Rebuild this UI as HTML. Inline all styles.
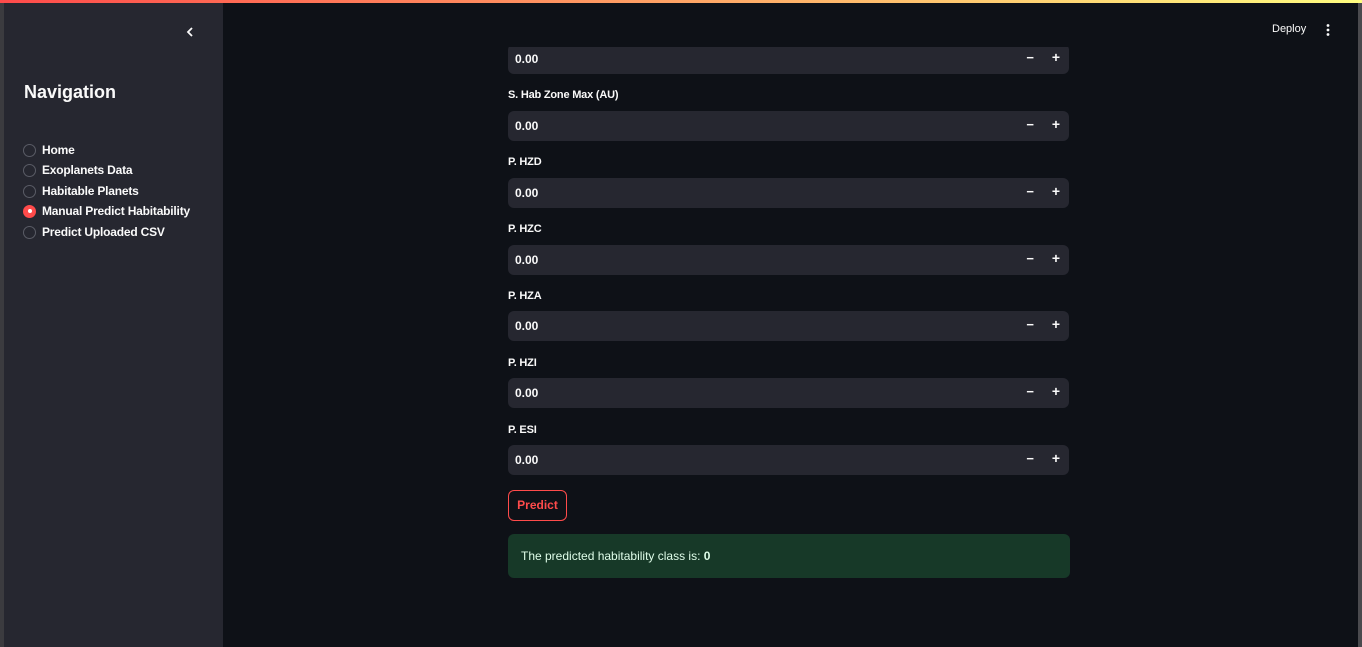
<!DOCTYPE html>
<html><head><style>
*{box-sizing:border-box;margin:0;padding:0}
body{width:1362px;height:647px;overflow:hidden;background:#0e1117;font-family:"Liberation Sans",sans-serif;position:relative;color:#fafafa}
.frameL{position:absolute;left:0;top:0;width:4px;height:647px;background:#3b3b3f}
.frameR{position:absolute;right:0;top:0;width:4px;height:647px;background:#4a4a4e}
.top{position:absolute;left:0;top:0;width:1362px;height:3px;background:linear-gradient(90deg,#ff4b4b,#fffd80)}
.side{position:absolute;left:4px;top:3px;width:219px;height:644px;background:#262730}
.chev{position:absolute;left:181px;top:23px}
h2{position:absolute;left:24px;top:82px;font-size:18px;font-weight:bold}
.radio{position:absolute;left:23px;font-size:12px;font-weight:bold;display:flex;align-items:center;letter-spacing:-0.2px}
.radio i{width:13px;height:13px;border:1px solid #5a5c66;border-radius:50%;margin-right:6px;display:inline-block}
.radio i.on{background:#ff4b4b;border-color:#ff4b4b;position:relative}
.radio i.on:after{content:"";position:absolute;left:3.5px;top:3.5px;width:4px;height:4px;background:#fff;border-radius:50%}
.lbl{position:absolute;left:508px;font-size:11px;font-weight:bold;letter-spacing:-0.2px}
.inp{position:absolute;left:508px;width:561px;height:30px;background:#262730;border-radius:6px;font-size:12px;font-weight:bold;padding:8px 7px}
.inp .m{position:absolute;right:35px;top:6px;font-size:13px}
.inp .p{position:absolute;right:9px;top:5px;font-size:14px}
.hdr{position:absolute;left:223px;top:3px;width:1135px;height:44px;background:#0e1117}
.btn{position:absolute;left:508px;top:490px;width:59px;height:31px;border:1px solid #ff4b4b;border-radius:6px;color:#ff4b4b;font-size:12px;font-weight:bold;text-align:center;line-height:29px}
.ok{position:absolute;left:508px;top:534px;width:562px;height:44px;background:#173928;border-radius:6px;color:#dffde9;font-size:12px;padding:15px 13px}
</style></head><body>
<div class="frameL"></div><div class="frameR"></div>
<div class="side">
<svg class="chev" width="10" height="12" viewBox="0 0 10 12"><path d="M7 2 L3 6 L7 10" stroke="#fafafa" stroke-width="1.8" fill="none"/></svg>
</div>
<h2>Navigation</h2>
<div class="radio" style="top:143px"><i></i>Home</div>
<div class="radio" style="top:163px"><i></i>Exoplanets Data</div>
<div class="radio" style="top:184px"><i></i>Habitable Planets</div>
<div class="radio" style="top:204px"><i class="on"></i>Manual Predict Habitability</div>
<div class="radio" style="top:225px"><i></i>Predict Uploaded CSV</div>

<div class="inp" style="top:44px">0.00<span class="m">−</span><span class="p">+</span></div>
<div class="lbl" style="top:89px">S. Hab Zone Max (AU)</div>
<div class="inp" style="top:111px">0.00<span class="m">−</span><span class="p">+</span></div>
<div class="lbl" style="top:156px">P. HZD</div>
<div class="inp" style="top:178px">0.00<span class="m">−</span><span class="p">+</span></div>
<div class="lbl" style="top:223px">P. HZC</div>
<div class="inp" style="top:245px">0.00<span class="m">−</span><span class="p">+</span></div>
<div class="lbl" style="top:290px">P. HZA</div>
<div class="inp" style="top:311px">0.00<span class="m">−</span><span class="p">+</span></div>
<div class="lbl" style="top:357px">P. HZI</div>
<div class="inp" style="top:378px">0.00<span class="m">−</span><span class="p">+</span></div>
<div class="lbl" style="top:424px">P. ESI</div>
<div class="inp" style="top:445px">0.00<span class="m">−</span><span class="p">+</span></div>
<div class="btn">Predict</div>
<div class="ok">The predicted habitability class is: <b>0</b></div>

<div class="hdr">
<div style="position:absolute;left:1049px;top:20px;font-size:11px">Deploy</div>
<svg style="position:absolute;left:1102px;top:20px" width="6" height="14"><circle cx="3" cy="2.5" r="1.4" fill="#fafafa"/><circle cx="3" cy="7" r="1.4" fill="#fafafa"/><circle cx="3" cy="11.5" r="1.4" fill="#fafafa"/></svg>
</div>
<div class="top"></div>
</body></html>
